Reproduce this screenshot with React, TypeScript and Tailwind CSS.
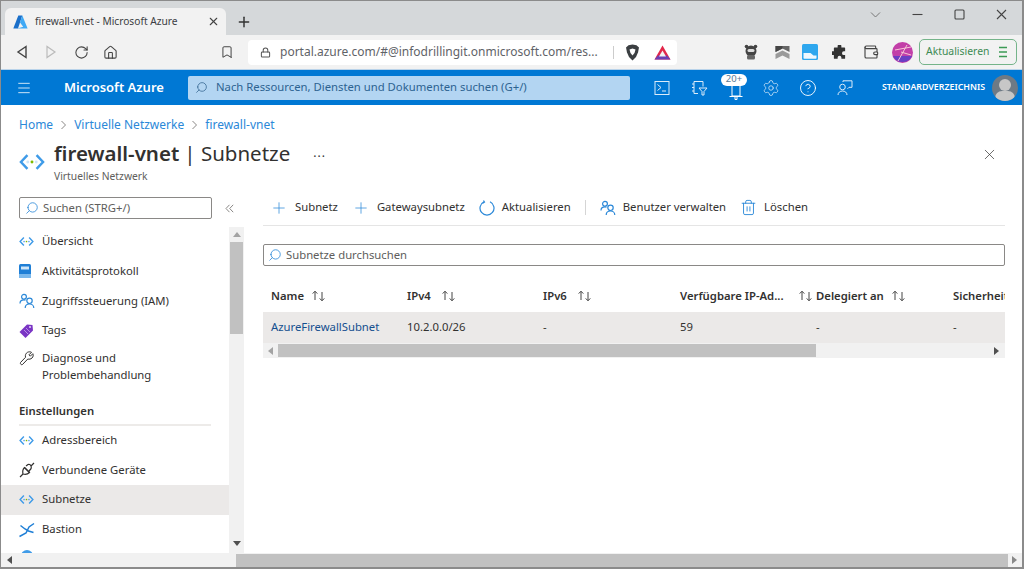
import { Bookmark, CircleHelp, Home, Lock, Menu, Plus, RotateCw, Search, Settings, Trash2, Wallet, X } from "lucide-react";
import type { ReactNode } from "react";

const font = "font-['Noto_Sans','Open_Sans',sans-serif]";

function NetIcon({ size = 15, dot = "#5ea0ef" }: { size?: number; dot?: string }) {
  return (
    <svg width={size} height={size} viewBox="0 0 16 16" fill="none">
      <path d="M5.2 3.800 1.200 8l4 4.200" stroke="#3f9be8" strokeWidth="1.500" />
      <path d="M10.800 3.800 14.800 8l-4 4.200" stroke="#3f9be8" strokeWidth="1.500" />
      <circle cx="5.400" cy="8" r="0.900" fill={dot} />
      <circle cx="8" cy="8" r="0.900" fill="#7fba00" />
      <circle cx="10.600" cy="8" r="0.900" fill={dot} />
    </svg>
  );
}

function PeopleIcon({ size = 16 }: { size?: number }) {
  return (
    <svg width={size} height={size} viewBox="0 0 16 16" fill="none" stroke="#2b88d8" strokeWidth="1.200">
      <circle cx="5" cy="3.800" r="2.400" />
      <path d="M1 10.500c0-2.200 1.600-3.600 4-3.600 .6 0 1 .1 1.500 .2" />
      <circle cx="10.500" cy="7.800" r="2.700" />
      <path d="M6.200 15c0-2.300 1.800-4 4.300-4s4.300 1.700 4.300 4" />
    </svg>
  );
}

function SortArrows() {
  return (
    <svg width="15" height="12" viewBox="0 0 15 12" fill="none" stroke="#444" strokeWidth="1" className="shrink-0">
      <path d="M4 10V1.500M1.700 3.600 4 1.200l2.300 2.400" />
      <path d="M11 2v8.500M8.700 8.400 11 10.800l2.300-2.400" />
    </svg>
  );
}

function Crumb() {
  return (
    <svg width="7" height="10" viewBox="0 0 7 10" fill="none" stroke="#8a8886" strokeWidth="1">
      <path d="M1.500 1 5.500 5l-4 4" />
    </svg>
  );
}

function MenuRow({ icon, label, active = false }: { icon: ReactNode; label: string; active?: boolean }) {
  return (
    <div className={`flex h-[29.6px] shrink-0 items-center ${active ? "bg-[#ebe9e8]" : ""}`}>
      <div className="flex w-[41px] shrink-0 pl-[18px]">{icon}</div>
      <span className="text-[11.300px] text-[#323130]">{label}</span>
    </div>
  );
}

function Action({ icon, label }: { icon: ReactNode; label: string }) {
  return (
    <div className="flex items-center gap-[7px] whitespace-nowrap text-[11.300px] text-[#323130]">
      {icon}
      <span>{label}</span>
    </div>
  );
}

function HeadCell({ label, gap = "gap-[7px]" }: { label: string; gap?: string }) {
  return (
    <div className={`flex items-center whitespace-nowrap text-[11.300px] font-semibold text-[#323130] ${gap}`}>
      <span>{label}</span>
      <SortArrows />
    </div>
  );
}

function BrowserBar() {
  return (
    <>
      <div className="flex h-[34px] items-end bg-[#d5d8da]">
        <div className="ml-[4px] flex h-[27px] w-[221px] items-center rounded-t-[6px] bg-[#f2f2f2] pl-[8px] pr-[6px]">
          <svg width="15" height="14" viewBox="0 0 15 14">
            <path d="M5.300 0.500h4L5 13.500H0.300z" fill="#1a6fc9" />
            <path d="M9.300 0.500 14.600 13.500H4.200l6-1.800-3.200-4.200 2.200-7z" fill="#3fa9f5" />
          </svg>
          <span className="ml-[7px] flex-1 whitespace-nowrap text-[10.200px] text-[#3c4043]">firewall-vnet - Microsoft Azure</span>
          <X size={13} strokeWidth={2} className="text-[#444]" />
        </div>
        <Plus size={16} strokeWidth={2.200} className="mb-[5px] ml-[10px] text-[#333]" />
        <div className="flex-1" />
        <div className="flex h-[34px] items-start gap-[27px] pr-[13px] pt-[6px]">
          <svg width="15" height="15" viewBox="0 0 15 15" fill="none" stroke="#777" strokeWidth="1"><path d="M3 5.500 7.500 10 12 5.500" /></svg>
          <svg width="15" height="15" viewBox="0 0 15 15" fill="none" stroke="#444" strokeWidth="1.100"><path d="M2.500 7.500h10" /></svg>
          <svg width="15" height="15" viewBox="0 0 15 15" fill="none" stroke="#444" strokeWidth="1.100"><rect x="3" y="3" width="9" height="9" rx="1" /></svg>
          <svg width="15" height="15" viewBox="0 0 15 15" fill="none" stroke="#444" strokeWidth="1.100"><path d="M3 3l9 9M12 3l-9 9" /></svg>
        </div>
      </div>
      <div className="flex h-[35px] items-center border-b border-[#b9d3ea] bg-[#f2f2f2]">
        <svg className="ml-[15px]" width="12" height="14" viewBox="0 0 12 14" fill="none" stroke="#444" strokeWidth="1.400"><path d="M10 1.500v11L2 7z" /></svg>
        <svg className="ml-[17px]" width="12" height="14" viewBox="0 0 12 14" fill="none" stroke="#bbb" strokeWidth="1.200"><path d="M2 1.500v11L10 7z" /></svg>
        <RotateCw size={15} strokeWidth={1.700} className="ml-[17px] text-[#444]" />
        <Home size={15} strokeWidth={1.700} className="ml-[14px] text-[#444]" />
        <Bookmark size={14} strokeWidth={1.700} className="ml-[102px] text-[#444]" />
        <div className="ml-[14px] flex h-[25px] w-[429px] items-center rounded-[4px] bg-white pl-[12px]">
          <Lock size={11} strokeWidth={2.200} className="shrink-0 text-[#555]" />
          <span className="ml-[9px] w-[332px] overflow-hidden whitespace-nowrap text-[12px] text-[#5f6368]">portal.azure.com/#@infodrillingit.onmicrosoft.com/res...</span>
          <div className="ml-[1px] h-[13px] w-px bg-[#ccc]" />
          <svg className="ml-[11px]" width="15" height="17" viewBox="0 0 15 17">
            <path d="M7.500 .5 11.500 1.200 14 3.500 13 8.500 11 13 7.500 16.500 4 13 2 8.500 1 3.500 3.500 1.200z" fill="#3b3f42" />
            <path d="M4.500 5.500 7.500 4.500l3 1-1 3.500-2 2.500-2-2.500z" fill="#fff" />
          </svg>
          <svg className="ml-[14px]" width="17" height="15" viewBox="0 0 17 15">
            <path d="M8.500 .5 16.500 14.500H.5z" fill="#e2274a" />
            <path d="M.5 14.500 4 10.500h9l3.500 4z" fill="#6a3fb5" />
            <path d="M8.500 5.500 12 11.500H5z" fill="#f2f2f2" />
          </svg>
        </div>
        <div className="flex-1" />
        <svg width="16" height="16" viewBox="0 0 16 16" className="mr-[16px]">
          <circle cx="8" cy="7" r="5.500" fill="#444" />
          <circle cx="3.500" cy="2.500" r="1.800" fill="#444" />
          <circle cx="12.500" cy="2.500" r="1.800" fill="#444" />
          <rect x="4" y="11" width="8" height="4.500" rx="1.500" fill="#666" />
          <rect x="4.500" y="5" width="7" height="3" rx="1.500" fill="#ddd" />
        </svg>
        <svg width="15" height="15" viewBox="0 0 15 15" className="mr-[12px]">
          <path d="M.5 1h14v6L7.500 3.500.5 7z" fill="#666" />
          <path d="M.5 1h7v2.500L.5 7z" fill="#444" />
          <path d="M.5 9 7.500 5.500l7 3.500v5L7.500 10.500.5 14z" fill="#9a9a9a" />
        </svg>
        <svg width="16" height="16" viewBox="0 0 16 16" className="mr-[14px]">
          <rect width="16" height="16" rx="1.500" fill="#2ea7ee" />
          <path d="M1.500 9h7l3 2.500h3v2.500a.8 .8 0 0 1-.8 .8H2.300a.8 .8 0 0 1-.8-.8z" fill="#eef8fe" />
        </svg>
        <svg width="15" height="15" viewBox="0 0 24 24" fill="#333" className="mr-[16px]">
          <path d="M9 2a3 3 0 0 1 6 0v2h5a1 1 0 0 1 1 1v5h-2a3 3 0 0 0 0 6h2v5a1 1 0 0 1-1 1h-5v-2a3 3 0 0 0-6 0v2H4a1 1 0 0 1-1-1v-5H1a3 3 0 0 1 0-6h2V5a1 1 0 0 1 1-1h5z" />
        </svg>
        <Wallet size={16} strokeWidth={1.700} className="mr-[13px] text-[#444]" />
        <svg width="21" height="21" viewBox="0 0 21 21" className="mr-[6px]">
          <circle cx="10.500" cy="10.500" r="10.500" fill="#c23fa8" />
          <path d="M1 14A10.500 10.500 0 0 0 20 14z" fill="#6a3fc4" />
          <path d="M3 8 19 5M6 19 15 3M9 10l10 3" stroke="#f7c6d6" strokeWidth="1" />
        </svg>
        <div className="mr-[5px] flex h-[26px] w-[98px] items-center justify-between rounded-[5px] border border-[#75b48a] pl-[6px] pr-[8px] text-[#3c8a52]">
          <span className="text-[10.400px]">Aktualisieren</span>
          <svg width="10" height="12" viewBox="0 0 10 12" stroke="#3c9a55" strokeWidth="1.400"><path d="M1 1.500h8M1 6h8M1 10.500h8" /></svg>
        </div>
      </div>
    </>
  );
}

function AzureBar() {
  return (
    <div className="flex h-[35px] items-center bg-[#0078d4] text-white">
      <Menu size={16} strokeWidth={1.200} className="ml-[15px]" />
      <span className="ml-[32px] w-[124px] whitespace-nowrap text-[13px] font-semibold">Microsoft Azure</span>
      <div className="flex h-[24px] w-[442px] items-center rounded-[2px] bg-[#b3d5f2] pl-[7px]">
        <Search size={13} strokeWidth={1.400} className="-scale-x-100 text-[#33658f]" />
        <span className="ml-[8px] whitespace-nowrap text-[11.300px] text-[#2d6391]">Nach Ressourcen, Diensten und Dokumenten suchen (G+/)</span>
      </div>
      <svg className="ml-[24px]" width="16" height="16" viewBox="0 0 16 16" fill="none" stroke="#dcecf9" strokeWidth="1">
        <rect x="1" y="1.500" width="14" height="13" />
        <path d="M3.500 4.500 7 7.500l-3.500 3M8 11h4" />
      </svg>
      <svg className="ml-[21px]" width="17" height="17" viewBox="0 0 17 17" fill="none" stroke="#dcecf9" strokeWidth="1">
        <path d="M3 2.500h9v5M3 2.500v12h4M1 5h2M1 8.500h2M1 12h2M8 9h8l-3 3.500V16h-2v-3.500z" />
      </svg>
      <div className="relative ml-[20px] mt-[10px] h-[16px] w-[16px]">
        <svg width="16" height="16" viewBox="0 0 16 16" fill="none" stroke="#fff" strokeWidth="1">
          <path d="M4 1v10h8V1M1.500 11.500h13M7 12v2.500h2V12" />
        </svg>
        <div className="absolute left-[-7px] top-[-11px] flex h-[12px] w-[26px] items-center justify-center rounded-full bg-white text-[9.500px] text-[#5a7a96]">20+</div>
      </div>
      <Settings size={18} strokeWidth={1} className="ml-[18px] text-[#dcecf9]" />
      <CircleHelp size={18} strokeWidth={1.200} className="ml-[19px] text-white" />
      <svg className="ml-[20px]" width="16" height="16" viewBox="0 0 16 16" fill="none" stroke="#dcecf9" strokeWidth="1">
        <circle cx="5.500" cy="7" r="2.800" />
        <path d="M1 15c0-2.500 2-4 4.500-4S10 12.500 10 15" />
        <path d="M6 2V.800h9v6.500h-3l-1.500 1.500" />
      </svg>
      <span className="ml-[29px] w-[110px] whitespace-nowrap text-[8.800px] font-semibold">STANDARDVERZEICHNIS</span>
      <div className="relative h-[26px] w-[26px] overflow-hidden rounded-full bg-[#6f7a85]">
        <div className="absolute left-[7px] top-[4px] h-[12px] w-[12px] rounded-full bg-[#c7c7c7]" />
        <div className="absolute left-[3px] top-[16px] h-[14px] w-[20px] rounded-full bg-[#c7c7c7]" />
      </div>
    </div>
  );
}

function Sidebar() {
  return (
    <div className="flex h-[356px] w-[243px] shrink-0 flex-col">
      <div className="flex h-[30px] shrink-0 items-start">
        <div className="ml-[18px] flex h-[22px] w-[193px] items-center rounded-[2px] border border-[#8a8886] pl-[5px]">
          <Search size={14} strokeWidth={1.400} className="-scale-x-100 text-[#2b88d8]" />
          <span className="ml-[4px] text-[11.300px] text-[#605e5c]">Suchen (STRG+/)</span>
        </div>
        <svg className="ml-[13px] mt-[7px]" width="9" height="9" viewBox="0 0 9 9" fill="none" stroke="#8a8886" strokeWidth="1">
          <path d="M4.500 .8 1 4.500l3.500 3.700M8.200 .8 4.700 4.500l3.500 3.700" />
        </svg>
      </div>
      <div className="flex min-h-0 flex-1">
        <div className="flex w-[228px] flex-col overflow-hidden">
          <MenuRow icon={<NetIcon />} label="Übersicht" />
          <MenuRow
            icon={
              <svg width="12" height="14" viewBox="0 0 12 14">
                <rect width="12" height="14" rx="1.500" fill="#1f7fd6" />
                <rect x="2" y="2.500" width="8" height="3" fill="#cfe6f8" />
                <rect y="10" width="12" height="4" fill="#7ab8ec" />
              </svg>
            }
            label="Aktivitätsprotokoll"
          />
          <MenuRow icon={<PeopleIcon />} label="Zugriffssteuerung (IAM)" />
          <MenuRow
            icon={
              <svg width="14" height="14" viewBox="0 0 14 14">
                <path d="M8 .5 13.500 1l.5 5.500-7.500 7.500L.5 8z" fill="#7a35c4" />
                <path d="M5 6l4 4M7 4l4 4" stroke="#c9a7ee" strokeWidth="0.800" />
                <circle cx="11" cy="3" r="1" fill="#e6d6f8" />
              </svg>
            }
            label="Tags"
          />
          <div className="flex h-[41px] shrink-0 pt-[5px]">
            <div className="flex w-[41px] shrink-0 pl-[18px] pt-[1px]">
              <svg width="15" height="15" viewBox="0 0 15 15" fill="none" stroke="#323130" strokeWidth="1">
                <path d="M1.500 11.500 6.500 6.300C6 4 6.800 2.300 8.500 1.300 10 .6 11.500 .7 12.500 1.300L10 3.800 11.300 5.200 13.800 2.700C14.500 4 14.300 5.800 13 7 11.700 8.200 10.200 8.400 8.800 8L3.500 13.500C2.500 14.300 .8 12.800 1.500 11.500Z" />
              </svg>
            </div>
            <span className="text-[11.300px] leading-[16.500px] text-[#323130]">
              Diagnose und
              <br />
              Problembehandlung
            </span>
          </div>
          <div className="ml-[18px] mr-[18px] mt-[16.600px] flex h-[23px] shrink-0 items-start border-b-2 border-[#edebe9] text-[11.300px] font-semibold leading-[16px] text-[#323130]">Einstellungen</div>
          <MenuRow icon={<NetIcon />} label="Adressbereich" />
          <MenuRow
            icon={
              <svg width="16" height="16" viewBox="0 0 16 16" fill="none" stroke="#323130" strokeWidth="1.200">
                <path d="M1 15 4 12M12 4l3-3M5.500 5.500l5 5" />
                <path d="M5.500 5.500C3.500 7.500 3.500 10 4 12c2 .6 4.500 .4 6.500-1.500zM7 4 9 2.500c1-.5 2.500 0 3 1.500s.7 2-.2 3L10 9" />
              </svg>
            }
            label="Verbundene Geräte"
          />
          <MenuRow active icon={<NetIcon />} label="Subnetze" />
          <MenuRow
            icon={
              <svg width="16" height="16" viewBox="0 0 16 16" fill="none" stroke="#1f7fd6" strokeWidth="1.500">
                <path d="M.5 14.500 7 11l3-6 5-3.500M1.500 3.500 6 7l3.500 2 5 1.500" />
              </svg>
            }
            label="Bastion"
          />
          <div className="shrink-0 pl-[20px] pt-[6px]">
            <div className="h-[12px] w-[12px] rounded-full bg-[#3f9be8]" />
          </div>
        </div>
        <div className="flex w-[15px] flex-col items-center bg-[#f1f1f1]">
          <svg width="8" height="5" viewBox="0 0 8 5" className="mt-[5px]" fill="#a3a3a3"><path d="M4 0 8 5H0z" /></svg>
          <div className="mt-[5px] h-[92px] w-[13px] bg-[#c1c1c1]" />
          <div className="flex-1" />
          <svg width="8" height="5" viewBox="0 0 8 5" className="mb-[7px]" fill="#505050"><path d="M4 5 8 0H0z" /></svg>
        </div>
      </div>
    </div>
  );
}

function MainPane() {
  return (
    <div className="ml-[19px] flex w-[742px] flex-col">
      <div className="flex h-[29px] shrink-0 items-center gap-[14px] border-b border-[#e5e5e5] pb-[7px] pl-[7px]">
        <Action icon={<Plus size={18} strokeWidth={1} className="text-[#2b88d8]" />} label="Subnetz" />
        <Action icon={<Plus size={18} strokeWidth={1} className="text-[#2b88d8]" />} label="Gatewaysubnetz" />
        <Action
          icon={
            <svg width="16" height="16" viewBox="0 0 16 16" fill="none" stroke="#2b88d8" strokeWidth="1.200">
              <path d="M5 1.800A7 7 0 1 0 11 1.800M4.500 .5 5.500 2 3.700 3.200" />
            </svg>
          }
          label="Aktualisieren"
        />
        <div className="h-[15px] w-px bg-[#d5d5d5]" />
        <Action icon={<PeopleIcon />} label="Benutzer verwalten" />
        <Action icon={<Trash2 size={17} strokeWidth={1.300} className="text-[#2b88d8]" />} label="Löschen" />
      </div>
      <div className="mt-[18px] flex h-[22px] shrink-0 items-center rounded-[2px] border border-[#8a8886] pl-[4px]">
        <Search size={14} strokeWidth={1.400} className="-scale-x-100 text-[#2b88d8]" />
        <span className="ml-[4px] text-[11.300px] text-[#605e5c]">Subnetze durchsuchen</span>
      </div>
      <div className="mt-[18px] grid h-[24px] shrink-0 grid-cols-[136px_136px_137px_136px_137px_52px] items-center overflow-hidden pl-[8px]">
        <HeadCell label="Name" />
        <HeadCell label="IPv4" gap="gap-[10px]" />
        <HeadCell label="IPv6" gap="gap-[10px]" />
        <HeadCell label="Verfügbare IP-Ad..." gap="gap-[14px]" />
        <HeadCell label="Delegiert an" />
        <span className="whitespace-nowrap text-[11.300px] font-semibold text-[#323130]">Sicherheit</span>
      </div>
      <div className="mt-[4px] grid h-[31px] shrink-0 grid-cols-[136px_136px_137px_136px_137px_52px] items-center bg-[#ebe9e8] pl-[8px] text-[11.300px] text-[#323130]">
        <span className="text-[#15508f]">AzureFirewallSubnet</span>
        <span>10.2.0.0/26</span>
        <span>-</span>
        <span>59</span>
        <span>-</span>
        <span>-</span>
      </div>
      <div className="flex h-[15px] shrink-0 items-center bg-[#f1f1f1]">
        <svg className="ml-[5px]" width="5" height="8" viewBox="0 0 5 8" fill="#a3a3a3"><path d="M5 0v8L0 4z" /></svg>
        <div className="ml-[5px] h-[13px] w-[538px] bg-[#c1c1c1]" />
        <div className="flex-1" />
        <svg className="mr-[6px]" width="5" height="8" viewBox="0 0 5 8" fill="#505050"><path d="M0 0v8l5-4z" /></svg>
      </div>
    </div>
  );
}

export default function App() {
  return (
    <div className={`flex h-[569px] w-[1024px] flex-col overflow-hidden border-b-2 border-l border-r-2 border-t border-[#8b8b8b] bg-white ${font}`}>
      <BrowserBar />
      <AzureBar />
      <div className="shrink-0 px-[18px] pt-[12px]">
        <div className="flex h-[15px] items-center gap-[7px] text-[12px] text-[#2b88d8]">
          <span>Home</span>
          <Crumb />
          <span>Virtuelle Netzwerke</span>
          <Crumb />
          <span>firewall-vnet</span>
        </div>
      </div>
      <div className="flex h-[65px] shrink-0 items-start pt-[5px]">
        <div className="ml-[18px] mt-[12px] w-[35px]">
          <NetIcon size={26} dot="#cfe6f8" />
        </div>
        <div>
          <div className="flex h-[32px] items-center whitespace-nowrap text-[20.500px] text-[#323130]">
            <span className="font-semibold">firewall-vnet</span>
            <span className="ml-[5px]">| Subnetze</span>
            <span className="ml-[23px] text-[12px] tracking-[1px]">...</span>
          </div>
          <div className="text-[10.300px] text-[#605e5c]">Virtuelles Netzwerk</div>
        </div>
        <div className="flex-1" />
        <X size={17} strokeWidth={1} className="mr-[24px] mt-[9px] text-[#323130]" />
      </div>
      <div className="flex h-[356px] shrink-0">
        <Sidebar />
        <MainPane />
      </div>
      <div className="flex h-[14px] shrink-0 items-center bg-[#f1f1f1]">
        <svg className="ml-[6px]" width="5" height="8" viewBox="0 0 5 8" fill="#505050"><path d="M5 0v8L0 4z" /></svg>
        <div className="ml-[224px] h-[13px] w-[772px] bg-[#c1c1c1]" />
        <div className="flex-1" />
        <svg className="mr-[5px]" width="5" height="8" viewBox="0 0 5 8" fill="#888"><path d="M0 0v8l5-4z" /></svg>
      </div>
    </div>
  );
}
